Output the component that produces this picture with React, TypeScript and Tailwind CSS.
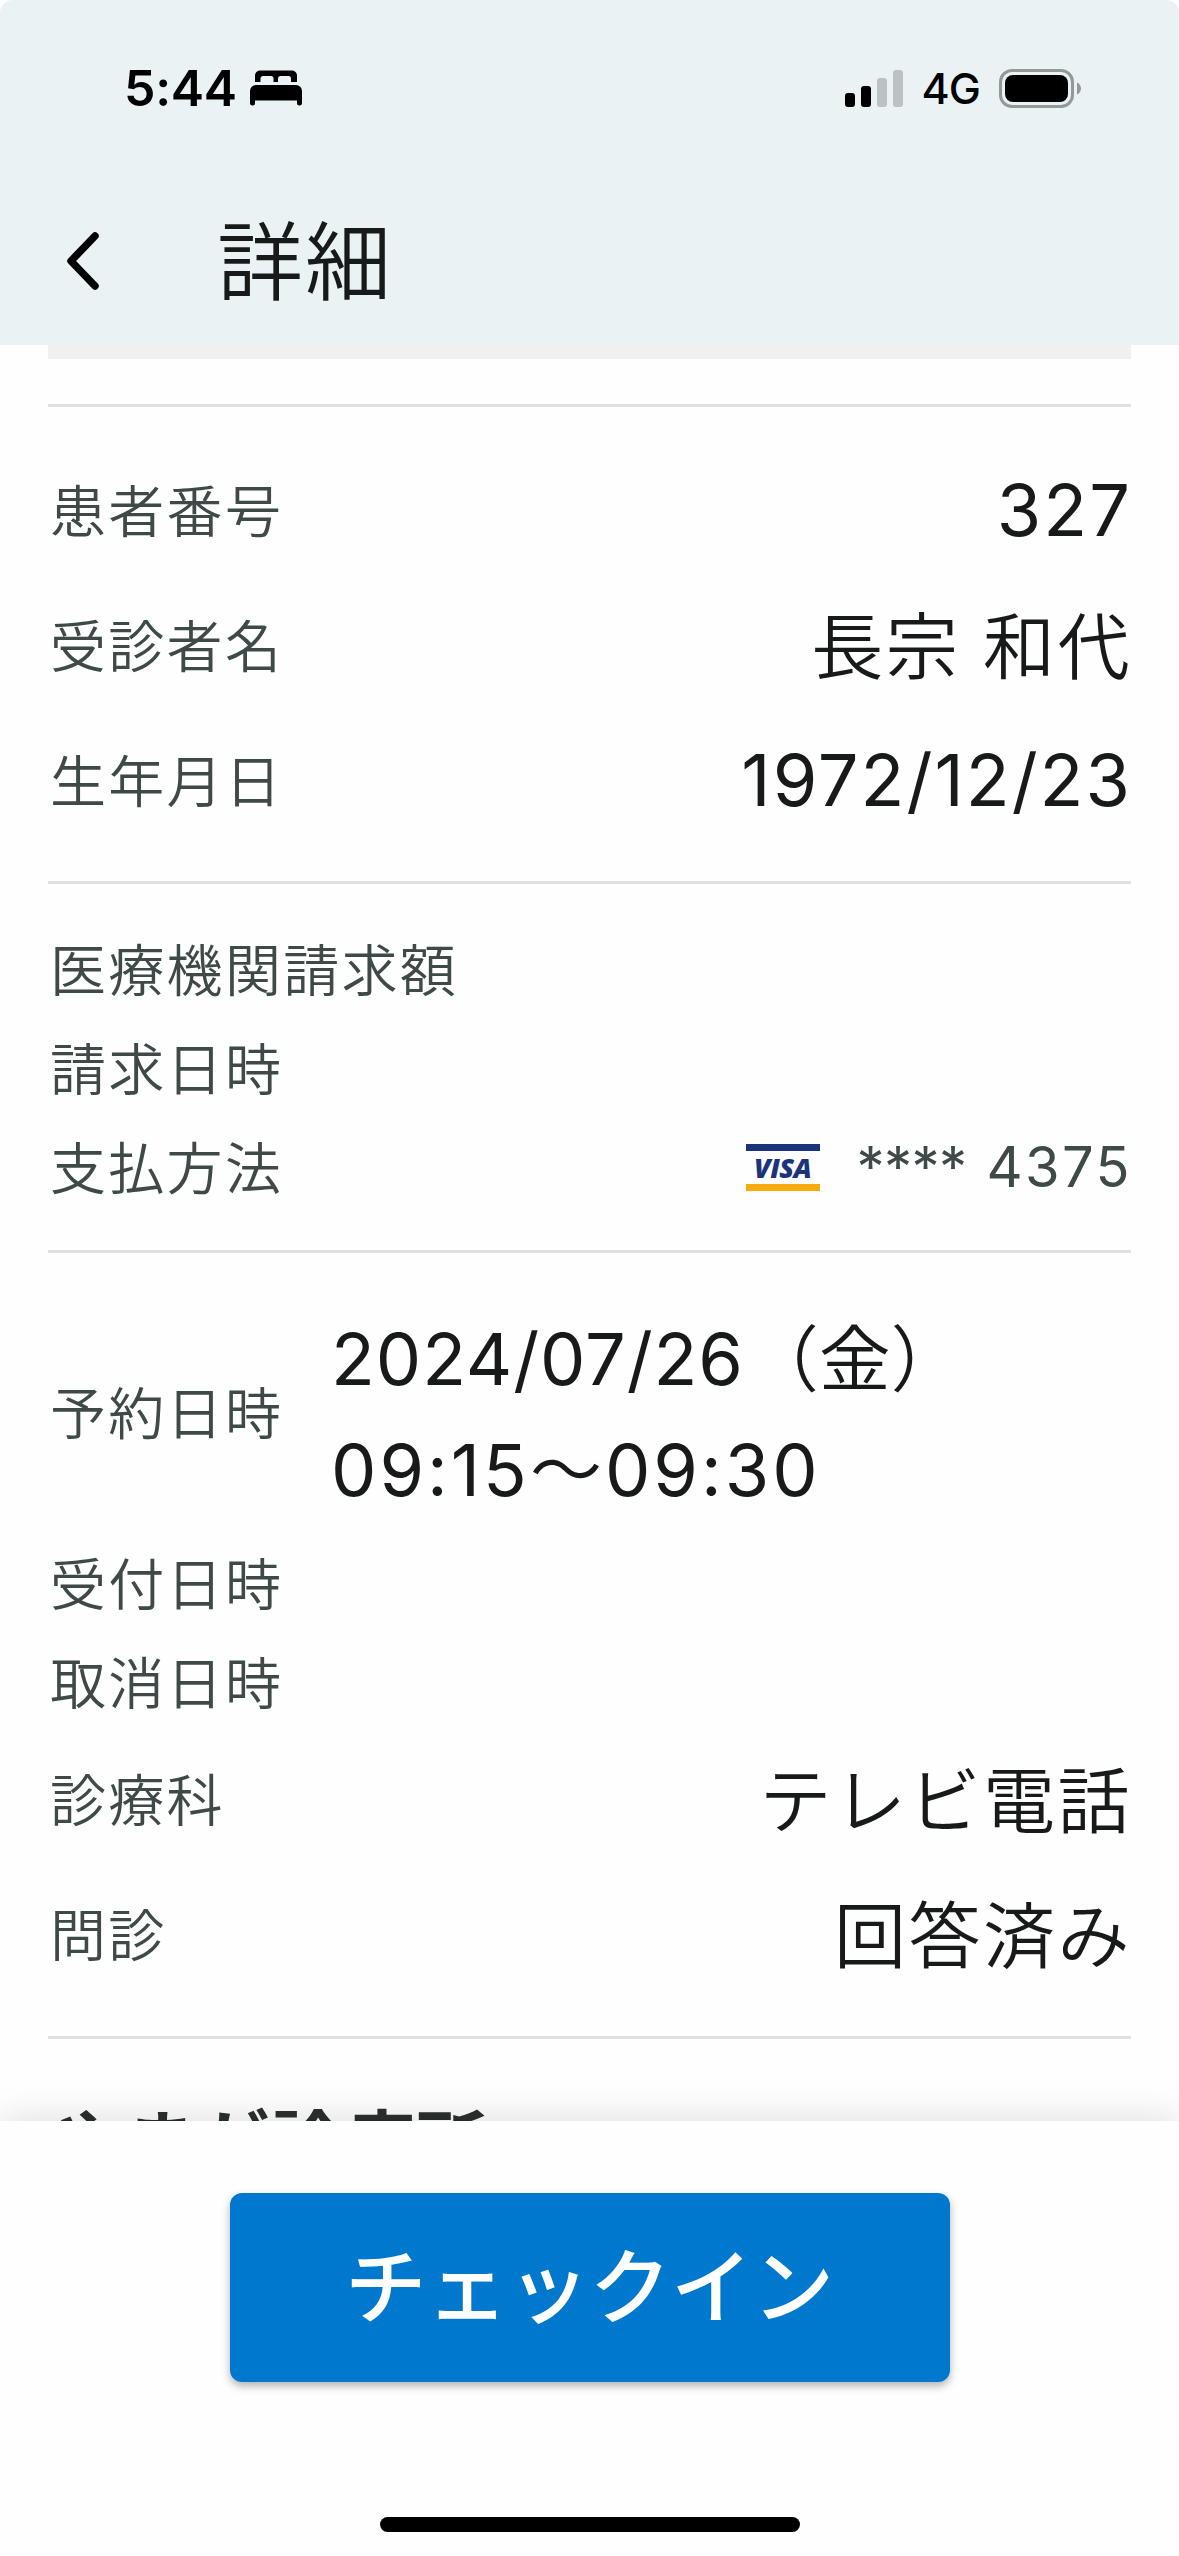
import type { ReactNode } from "react";

const BedIcon = () => (
  <svg width="52" height="36" viewBox="0 0 52 36" className="ml-[13px]">
    <path d="M5 12V5.5A5 5 0 0 1 10 0.5H42A5 5 0 0 1 47 5.5V12H41V8.500A2.500 2.500 0 0 0 38.500 6H30.500A2.500 2.500 0 0 0 28 8.500V12H23.500V8.500A2.500 2.500 0 0 0 21 6H13.500A2.500 2.500 0 0 0 10.500 8.500V12Z" />
    <path d="M0 33V21A6 6 0 0 1 6 15H46A6 6 0 0 1 52 21V33A2.500 2.500 0 0 1 47 33V30.500H5V33A2.500 2.500 0 0 1 0 33Z" />
  </svg>
);

const SignalIcon = () => (
  <svg width="58" height="38" viewBox="0 0 58 38">
    <rect x="0" y="24" width="10" height="14" rx="3" />
    <rect x="16" y="17" width="10" height="21" rx="3" />
    <rect x="32" y="9" width="10" height="29" rx="3" fill="#bcc2c4" />
    <rect x="48" y="1" width="10" height="37" rx="3" fill="#bcc2c4" />
  </svg>
);

const BatteryIcon = () => (
  <svg width="82" height="39" viewBox="0 0 82 39">
    <rect x="1.500" y="1.500" width="72" height="36" rx="11.500" fill="none" stroke="#939899" strokeWidth="3" />
    <rect x="6" y="6" width="63" height="27" rx="8" />
    <path d="M78 13.500C80.500 14.500 82 17 82 19.500S80.500 24.500 78 25.500Z" fill="#939899" />
  </svg>
);

const VisaLogo = () => (
  <div className="mr-[37px] flex h-[47px] w-[74px] flex-col items-center justify-between border-t-[7px] border-b-[7px] border-t-[#1a337b] border-b-[#faab0c]">
    <span className="font-['Open_Sans'] text-[27px] leading-[33px] font-extrabold italic tracking-[-0.5px] text-[#1a337b]">
      VISA
    </span>
  </div>
);

const Divider = () => <div className="h-[3px] shrink-0 bg-[#e0e0e0]" />;

type RowProps = {
  label: string;
  tall?: boolean;
  children?: ReactNode;
};

const Row = ({ label, tall, children }: RowProps) => (
  <div
    className={`flex items-center justify-between ${tall ? "h-[135px]" : "h-[99px]"}`}
  >
    <span className="ml-[2px] text-[56px] leading-none tracking-[2.3px] text-[#3f4a48]">
      {label}
    </span>
    {children}
  </div>
);

const Value = ({ children }: { children: ReactNode }) => (
  <span className="mr-[-1px] text-[72px] leading-none tracking-[2.5px]">
    {children}
  </span>
);

const NumberValue = ({ children }: { children: ReactNode }) => (
  <span className="mr-[-1px] mb-[3px] text-[72px] leading-none font-normal tracking-[2px]">
    {children}
  </span>
);

const App = () => {
  return (
    <div className="flex h-[2556px] w-[1179px] flex-col overflow-hidden bg-[#fefefe] font-['Inter','Noto_Sans_CJK_JP',sans-serif] font-[350] text-[#171a19]">
      <header className="h-[345px] shrink-0 rounded-t-[13px] bg-[#eaf2f4]">
        <div className="flex h-[176px] items-center pr-[98px] pl-[124px] text-black">
          <span className="text-[50px] leading-none font-semibold tracking-[-0.3px]">5:44</span>
          <BedIcon />
          <div className="ml-auto flex items-center">
            <SignalIcon />
            <span className="mr-[19px] ml-[18px] text-[43px] leading-none font-[450] tracking-[-0.9px]">4G</span>
            <BatteryIcon />
          </div>
        </div>
        <div className="flex h-[169px] items-center pl-[66px]">
          <svg width="34" height="60" viewBox="0 0 34 60" fill="none" stroke="#000" strokeWidth="7.500" strokeLinecap="round" strokeLinejoin="round">
            <path d="M29 5L5 30L29 55" />
          </svg>
          <h1 className="mt-[4px] ml-[117px] text-[86px] leading-none tracking-[2px]">詳細</h1>
        </div>
      </header>

      <main className="flex h-[1776px] shrink-0 flex-col overflow-hidden px-[48px]">
        <div className="mb-[45px] h-[14px] shrink-0 bg-[#f0f0f0]" />
        <Divider />
        <section className="pt-[37px] pb-[32px]">
          <Row label="患者番号" tall>
            <NumberValue>327</NumberValue>
          </Row>
          <Row label="受診者名" tall>
            <Value>長宗 和代</Value>
          </Row>
          <Row label="生年月日" tall>
            <NumberValue>1972/12/23</NumberValue>
          </Row>
        </section>
        <Divider />
        <section className="pt-[37px] pb-[32px]">
          <Row label="医療機関請求額" />
          <Row label="請求日時" />
          <Row label="支払方法">
            <div className="mr-[-1px] mb-[3px] flex items-center text-[56px] leading-none text-[#3f4a48]">
              <VisaLogo />
              <span className="mr-[20px] font-normal tracking-[-0.6px]">****</span>
              <span className="font-[370] tracking-[2.4px]">4375</span>
            </div>
          </Row>
        </section>
        <Divider />
        <section className="pt-[39px] pb-[32px]">
          <div className="flex h-[243px] items-center">
            <span className="ml-[2px] w-[281px] text-[56px] leading-none tracking-[2.3px] text-[#3f4a48]">
              予約日時
            </span>
            <p className="text-[72px] leading-[111px]">
              <span className="mr-[3px] font-normal tracking-[0.9px]">2024/07/26</span>
              （金）
              <br />
              <span className="font-normal tracking-[3px]">09:15</span>
              <span className="tracking-[3px]">〜</span>
              <span className="font-normal tracking-[3px]">09:30</span>
            </p>
          </div>
          <Row label="受付日時" />
          <Row label="取消日時" />
          <Row label="診療科" tall>
            <Value>テレビ電話</Value>
          </Row>
          <Row label="問診" tall>
            <Value>回答済み</Value>
          </Row>
        </section>
        <div className="mt-[1px]">
          <Divider />
        </div>
        <h2 className="mt-[69px] ml-[4px] shrink-0 text-[72px] leading-none font-bold tracking-[0.6px] text-[#2b2f2e]">
          やまが診療所
        </h2>
      </main>

      <footer className="relative flex flex-1 flex-col items-center bg-[#fefefe] pt-[72px] shadow-[0_0_36px_rgba(0,0,0,0.14)]">
        <button className="h-[189px] w-[720px] rounded-[12px] bg-[#0078ce] text-[81.5px] leading-none font-medium text-white shadow-[0_4px_8px_rgba(0,0,0,0.3)]">
          チェックイン
        </button>
        <div className="mt-auto mb-[24px] h-[15px] w-[420px] rounded-full bg-black" />
      </footer>
    </div>
  );
};

export default App;
